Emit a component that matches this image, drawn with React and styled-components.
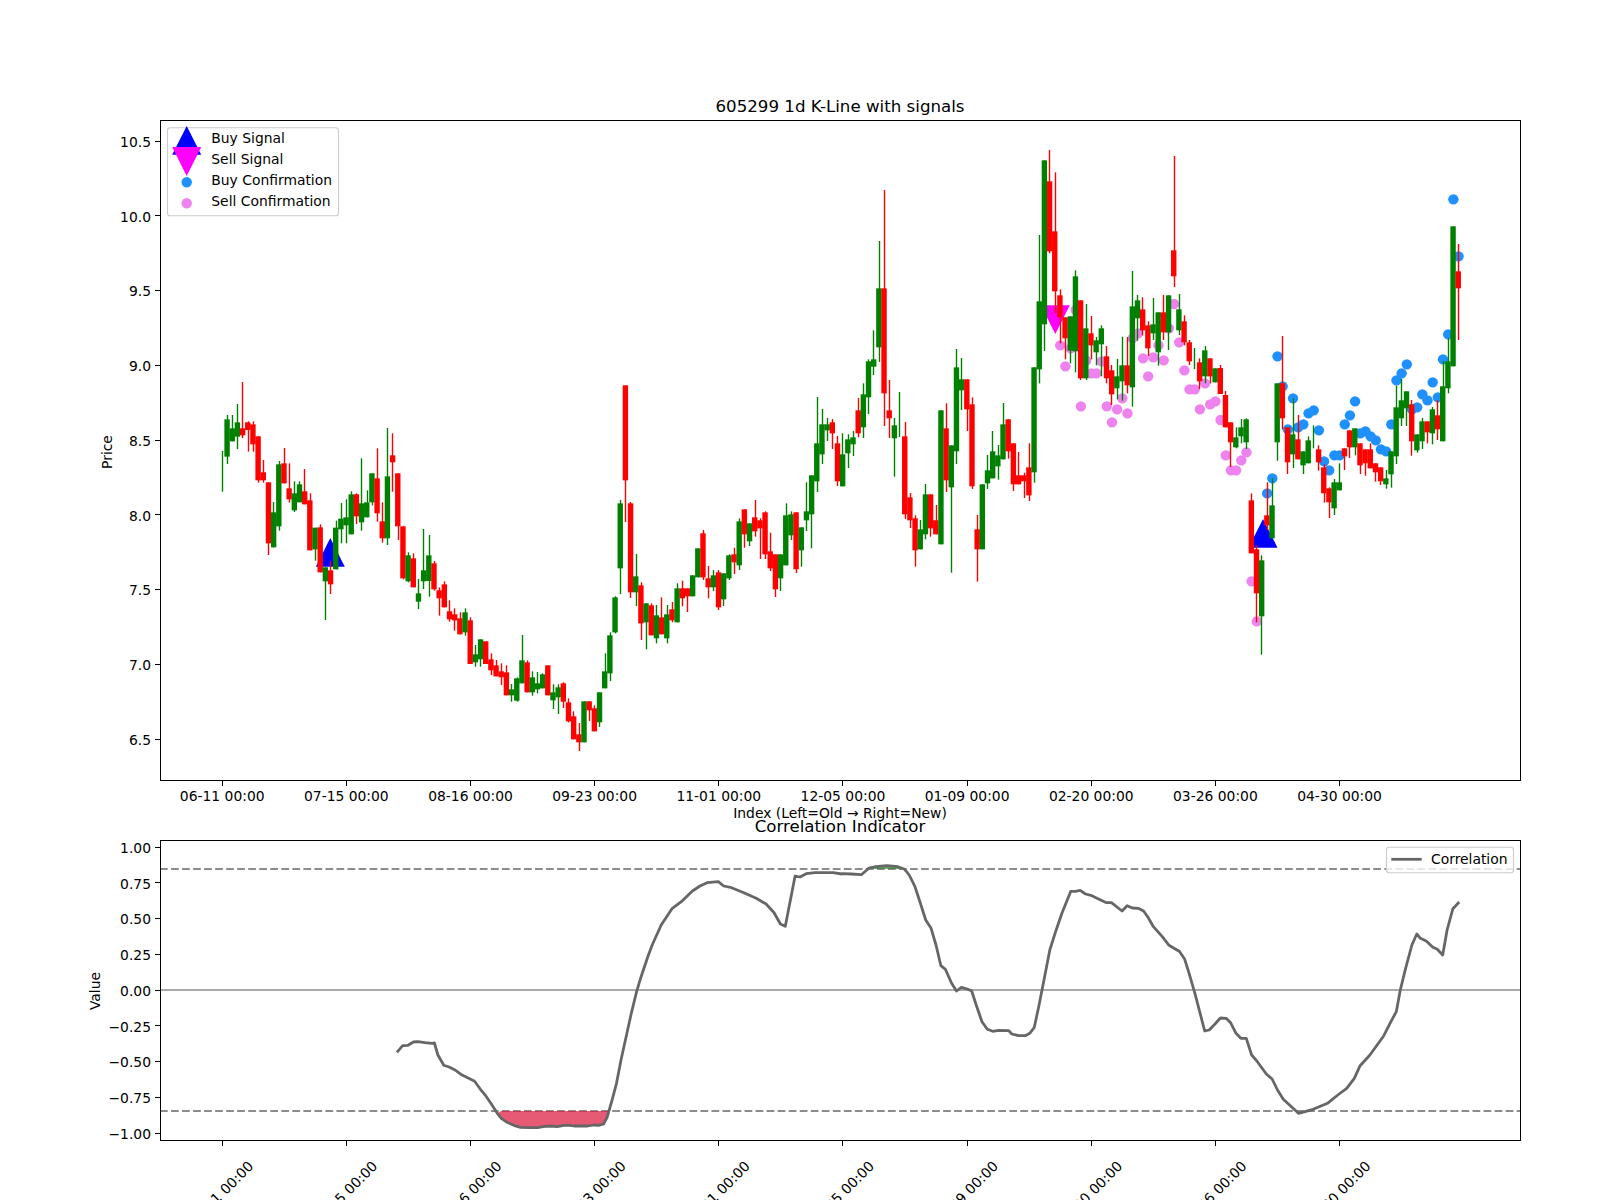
import React from "react";
import styled, { createGlobalStyle } from "styled-components";

const GlobalStyle = createGlobalStyle`
  html, body { margin: 0; padding: 0; background: #fff; }
  body { overflow: hidden; font-family: "DejaVu Sans", sans-serif; }
`;

const Figure = styled.div`
  width: 1600px;
  height: 1200px;
  display: flex;
  flex-direction: column;
  background: #fff;
`;
const Plot = styled.svg`
  display: block;
  flex: none;
  width: 1600px;
  height: ${(p) => p.$h}px;
  overflow: visible;
`;
const Frame = styled.rect`
  fill: none;
  stroke: #000;
  stroke-width: 1;
  shape-rendering: crispEdges;
`;
const Tick = styled.line`
  stroke: #000;
  stroke-width: 1;
  shape-rendering: crispEdges;
`;
const Label = styled.text`
  font-family: "DejaVu Sans", sans-serif;
  font-size: 13.89px;
  fill: #000;
  text-anchor: ${(p) => p.$anchor || "middle"};
`;
const Title = styled(Label)`
  font-size: 16.67px;
`;
const LegendBox = styled.rect`
  fill: #fff;
  fill-opacity: 0.8;
  stroke: #ccc;
  stroke-width: 1.1;
`;
const Wick = styled.rect`
  fill: ${(p) => p.$color};
`;
const Body = styled.rect`
  fill: ${(p) => p.$color};
`;
const Dot = styled.circle`
  fill: ${(p) => p.$color};
`;
const Marker = styled.polygon`
  fill: ${(p) => p.$color};
`;
const Level = styled.line`
  stroke: ${(p) => p.$color};
  stroke-width: 2.08;
  stroke-dasharray: ${(p) => (p.$dashed ? "7.7 3.33" : "none")};
`;
const Curve = styled.polyline`
  fill: none;
  stroke: #666;
  stroke-width: 2.78;
  stroke-linejoin: round;
`;
const ZoneFill = styled.polygon`
  fill: ${(p) => p.$color};
  fill-opacity: 0.7;
`;
const LegendLine = styled.line`
  stroke: #666;
  stroke-width: 2.78;
`;

const seg = (y0, rows) =>
  rows.map(([c, wt, bt, bb, wb]) => ({
    c,
    wt: y0 + wt / 3,
    bt: bt == null ? null : y0 + bt / 3,
    bb: bb == null ? null : y0 + bb / 3,
    wb: y0 + wb / 3,
  }));

const candles = [
  ...seg(380, [
    ["g",213,null,null,335],["g",105,118,230,252],["g",105,145,184,184],["g",72,127,170,207],["r",6,145,166,174],
    ["r",124,127,150,215],["r",124,133,193,215],["r",169,169,301,308],["r",240,277,301,308],["r",307,307,490,525],
    ["g",366,397,502,502],["g",243,253,439,452],["r",204,250,310,310],["r",250,325,358,368],["g",304,340,391,396],
    ["g",304,313,367,367],["r",267,334,373,373],["r",340,361,511,511],["g",443,443,508,542],["r",433,442,577,577],
    ["g",562,562,604,720],["r",544,571,613,642],["g",422,443,568,568],["g",369,416,448,490],["g",358,412,436,490],
    ["g",334,343,463,463],["r",340,343,409,432],["g",235,370,427,452],["g",331,367,412,412],["g",280,280,367,376],
    ["r",205,295,400,425],["r",367,424,475,488],["g",144,289,475,495],["r",160,226,247,335],["r",280,280,439,480],
    ["r",439,439,595,598],["g",517,526,604,607],["r",520,535,622,622],
  ]),
  ...seg(480, [
    ["g",297,340,365,387],["g",147,271,304,327],["g",165,226,303,350],["r",243,250,328,332],["r",322,331,355,407],
    ["r",304,313,382,382],["r",361,394,418,425],["r",385,403,421,452],["r",397,415,463,463],["g",385,397,457,467],
    ["r",412,421,552,552],["g",495,523,547,560],["g",478,478,538,560],["r",484,484,552,552],["r",520,538,571,585],
    ["r",540,556,589,589],["r",550,574,592,615],["r",556,577,646,646],["g",612,628,646,665],["g",592,595,662,665],
    ["g",465,541,610,610],["r",541,547,637,637],["g",574,592,637,647],["g",576,610,628,640],["g",580,583,625,625],
    ["r",556,556,646,646],["g",613,637,661,687],["g",613,622,652,702],["r",607,610,665,684],["r",655,667,724,727],
    ["r",694,709,778,778],["r",729,763,787,813],["g",664,664,787,787],["r",664,664,691,723],["r",676,685,754,754],
    ["g",637,637,727,741],["g",520,574,625,625],["g",457,466,580,603],["g",349,352,457,460],
  ]),
  ...seg(360, [
    ["g",420,430,625,702],["r",76,76,361,486],["r",426,430,697,714],["g",582,649,697,738],["r",667,676,790,840],
    ["g",730,730,787,868],["r",730,736,826,826],["g",735,766,835,850],["r",712,772,823,823],["g",735,763,835,850],
    ["r",726,748,781,787],["g",670,685,787,787],["r",662,685,715,739],["r",685,685,709,756],["g",646,646,709,709],
    ["g",565,565,652,652],["r",510,520,652,660],["r",618,655,682,715],["g",630,646,682,693],["r",630,637,742,750],
    ["g",640,640,718,738],["g",583,586,655,660],["r",563,583,607,642],["g",475,484,616,630],["r",448,448,523,563],
    ["g",490,490,544,558],["r",420,472,514,530],["r",475,481,505,597],["r",454,457,583,597],["r",518,574,625,633],
    ["r",583,583,688,711],["g",583,583,655,693],["g",430,466,616,616],["g",454,463,526,540],["r",457,457,628,639],
  ]),
  ...seg(170, [
    ["g",1072,1072,1141,1190],["g",937,1024,1051,1083],["g",916,916,1033,1135],["g",681,820,934,966],["g",717,763,853,882],
    ["g",744,763,781,813],["r",747,757,790,837],["r",798,820,934,948],["g",790,853,949,949],["g",793,808,850,894],
    ["g",783,802,823,858],["r",684,721,790,802],["g",640,673,772,804],["g",568,574,682,732],["g",481,568,590,615],
    ["g",213,355,532,576],["r",60,355,670,768],["r",630,721,745,804],["g",744,766,805,920],["g",666,null,null,801],
    ["r",756,799,1033,1047],["r",969,982,1051,1074],["r",1036,1045,1141,1190],["g",1050,1078,1138,1138],["g",942,973,1093,1108],
    ["r",973,973,1075,1100],["r",1005,1051,1093,1093],["g",721,721,1123,1123],["r",700,775,931,966],["g",826,826,952,1208],
    ["g",537,592,844,882],["g",564,628,661,720],["r",628,628,718,783],["r",682,703,949,957],["r",1035,1078,1138,1235],
    ["g",943,943,1138,1138],["g",855,901,940,957],["g",783,844,925,925],["g",825,856,889,929],["g",699,763,868,868],
    ["r",748,748,844,866],["r",820,820,943,963],["r",846,916,943,943],["r",908,916,934,984],["r",820,892,976,993],
    ["g",592,592,907,938],["g",195,394,598,640],
  ]),
  ...seg(130, [
    ["g",91,91,583,663],["r",60,154,364,370],["r",127,304,484,550],["r",478,496,562,640],["r",562,562,625,688],
    ["g",559,559,662,700],["g",421,439,664,727],["r",511,511,745,750],["g",522,595,745,750],["r",558,610,646,688],
    ["g",621,631,667,706],["g",586,595,643,739],["r",648,679,745,760],["r",705,721,793,825],["g",687,739,775,808],
    ["g",620,706,754,812],["r",621,706,766,790],["g",423,529,772,830],["g",495,511,565,632],["r",502,538,601,616],
    ["r",574,586,655,678],["g",504,583,610,630],["g",547,547,667,707],["r",495,547,607,630],["g",496,496,607,660],
    ["r",78,361,439,471],["g",492,538,601,615],["r",556,574,637,646],["r",630,637,694,705],["g",654,null,null,717],
    ["r",685,697,754,777],["g",648,661,739,760],["r",685,685,739,760],["g",715,715,757,757],
  ]),
  ...seg(330, [
    ["r",105,114,192,192],["r",183,195,292,292],["r",277,277,337,411],["g",292,322,352,355],["g",267,292,319,340],
    ["g",265,268,337,357],["r",490,511,670,670],["r",646,658,790,877],["g",676,691,859,974],["r",457,556,586,600],
    ["g",445,526,625,625],["g",160,160,337,392],["r",18,160,265,298],["r",292,292,397,432],["g",205,313,373,414],
    ["r",255,328,388,388],["g",364,364,406,432],["g",319,331,400,400],["g",286,null,null,355],
  ]),
  ...seg(180, [
    ["r",796,808,847,872],["r",853,862,940,968],["r",922,925,967,1014],["g",897,907,985,1005],["g",850,907,931,931],
    ["r",805,805,829,870],["r",751,751,802,834],["g",745,745,802,826],["r",790,790,856,882],["r",808,808,850,887],
    ["r",790,808,865,865],["r",850,850,877,905],["r",862,862,904,915],["g",870,895,913,926],["g",814,814,883,923],
    ["g",617,682,829,852],["g",596,661,715,738],["g",634,634,685,738],["r",660,673,784,827],["g",763,763,811,818],
    ["g",714,724,784,807],["r",724,724,757,790],["g",681,688,760,793],["r",660,706,748,780],["g",543,619,784,784],
    ["g",475,544,625,640],["g",139,139,559,559],["r",192,274,325,480],
  ]),
];

const barX = (i) => 222.2 + 5.173 * i;
const COLORS = { r: "#ff0000", g: "#008000" };

const sellDotsY = [
  ...[646,709,655,540,829,692,730,730,694,829,877,838,805,850,625,610,685,739,682,646,691,595,522,637,721,778,778,838,760,823,814].map((p) => 130 + p / 3),
  ...[270,376,421,421,391,367,754,874].map((p) => 330 + p / 3),
];
const buyDots = [
  [202, 330 + 490 / 3], [203, 330 + 445 / 3],
  [204, 330 + 79 / 3], [205, 330 + 169 / 3], [206, 330 + 298 / 3], [207, 330 + 205 / 3], [208, 330 + 292 / 3],
  [209, 330 + 283 / 3], [210, 330 + 250 / 3], [211, 330 + 241 / 3],
  ...[751,844,871,826,826,733,706,664,760,754,769,781,808,814,733,601,580,553,688,682,643,661,607,652,538,463,58,229].map((p, k) => [212 + k, 180 + p / 3]),
];

const yUpper = (v) => 141 + (10.5 - v) * 149.5;
const yLower = (v) => 990 - v * 143;
const tickIdx = [0, 24, 48, 72, 96, 120, 144, 168, 192, 216];
const dateLabels = ["06-11 00:00", "07-15 00:00", "08-16 00:00", "09-23 00:00", "11-01 00:00", "12-05 00:00", "01-09 00:00", "02-20 00:00", "03-26 00:00", "04-30 00:00"];
const upperTicks = [10.5, 10, 9.5, 9, 8.5, 8, 7.5, 7, 6.5];
const lowerTicks = [1, 0.75, 0.5, 0.25, 0, -0.25, -0.5, -0.75, -1];
const fmtLower = (v) => (v < 0 ? "\u2212" : "") + Math.abs(v).toFixed(2);

const curveA = [[553,877],[566,857],[578,856],[590,846],[600,845],[616,848],[632,850],[637,849],[645,885],[658,916],[670,921],[682,929],[700,946],[714,955],[727,964],[740,988],[752,1007],[765,1033],[778,1060],[787,1075],[800,1087],[815,1096],[830,1102],[850,1103],[868,1103],[885,1099],[900,1098],[912,1100],[927,1096],[940,1096],[950,1098],[980,1098],[995,1095],[1005,1096],[1016,1092],[1024,1072],[1035,1020],[1045,970],[1055,900],[1065,840],[1078,760],[1090,695],[1100,650],[1115,590],[1125,555],[1145,495],[1170,445],[1190,425],[1215,393],[1232,378],[1248,368],[1273,365],[1285,378],[1300,382],[1330,398],[1358,415],[1380,432],[1398,458],[1412,492],[1423,499],[1445,348],[1456,351],[1470,341],[1490,338],[1530,338],[1550,342]]
  .map(([x, y]) => [150 + x / 2.24, 760 + y / 3]);
const curveB = [[5,341],[25,342],[48,344],[65,324],[80,320],[105,317],[130,320],[145,328],[155,345],[168,380],[180,430],[192,480],[204,505],[215,555],[226,617],[236,628],[250,670],[261,693],[272,682],[285,687],[295,693],[305,735],[318,785],[330,808],[342,814],[355,811],[378,812],[385,822],[400,827],[415,827],[425,820],[435,803],[445,740],[457,660],[470,570],[483,515],[497,460],[517,394],[527,394],[538,391],[550,402],[562,406],[578,416],[597,428],[608,428],[632,453],[643,437],[655,444],[668,445],[680,453],[690,472],[702,500],[722,530],[737,556],[750,566],[760,574],[772,597],[782,640],[795,700],[817,813],[827,810],[840,792],[852,774],[865,775],[875,788],[887,820],[898,835],[910,835],[922,885],[935,905],[955,942],[968,957],[980,990],[993,1018],[1027,1060],[1060,1048],[1092,1030],[1115,1005],[1135,985],[1152,955],[1165,917],[1187,885],[1203,855],[1218,827],[1232,790],[1246,755],[1255,690],[1267,625],[1281,555],[1292,522],[1300,535],[1313,543],[1328,562],[1338,568],[1350,585],[1360,510],[1373,446],[1387,426]]
  .map(([x, y]) => [840 + x / 2.24, 760 + y / 3]);
const pts = (list) => list.map(([x, y]) => `${x.toFixed(1)},${y.toFixed(1)}`).join(" ");

const lowBand = [[150 + 787 / 2.24, 1111], ...curveA.filter(([, y]) => y > 1111.5), [150 + 1028 / 2.24, 1111]];
const highBand = [[840 + 65 / 2.24, 869], ...curveB.filter(([x, y]) => y < 869 && x < 920), [840 + 148 / 2.24, 869]];

const tri = (cx, apex, base, half) => `${cx},${apex} ${cx - half},${base} ${cx + half},${base}`;

const legendRows = [
  { text: "Buy Signal", y: 143.3 },
  { text: "Sell Signal", y: 164.3 },
  { text: "Buy Confirmation", y: 185.3 },
  { text: "Sell Confirmation", y: 206.3 },
];

const snap = (v) => Math.floor(v) + 0.5;

function XTicks({ y }) {
  return tickIdx.map((i) => <Tick key={i} x1={snap(barX(i))} x2={snap(barX(i))} y1={y} y2={y + 5} />);
}

function PricePanel() {
  return (
    <Plot $h={820} viewBox="0 0 1600 820">
      <Title x={840} y={111.7}>605299 1d K-Line with signals</Title>
      <Marker $color="#0000ff" points={tri(330.3, 538, 566.7, 14.5)} />
      <Marker $color="#0000ff" points={tri(1263, 519, 547.7, 14.5)} />
      <Marker $color="#ff00ff" points="1040.8,305.3 1069.8,305.3 1055.3,334" />
      {sellDotsY.map((y, k) => <Dot key={k} $color="#ee82ee" cx={barX(162 + k)} cy={y} r={5.2} />)}
      {buyDots.map(([i, y]) => <Dot key={i} $color="#1e90ff" cx={barX(i)} cy={y} r={5.2} />)}
      {candles.map((b, i) =>
        b.bt == null ? null : (
          <Body key={i} $color={COLORS[b.c]} x={barX(i) - 3} y={b.bt} width={5.4} height={Math.max(b.bb - b.bt, 1)} />
        )
      )}
      {candles.map((b, i) => (
        <Wick key={i} $color={COLORS[b.c]} x={snap(barX(i)) - 0.7} y={b.wt} width={1.39} height={b.wb - b.wt} />
      ))}
      <Frame x={160.5} y={120.5} width={1360} height={660} />
      {upperTicks.map((v) => (
        <g key={v}>
          <Tick x1={155} x2={160} y1={snap(yUpper(v))} y2={snap(yUpper(v))} />
          <Label $anchor="end" x={151} y={yUpper(v) + 5.8}>{v.toFixed(1)}</Label>
        </g>
      ))}
      <XTicks y={781} />
      {dateLabels.map((d, k) => <Label key={d} x={barX(tickIdx[k])} y={800.7}>{d}</Label>)}
      <Label x={840} y={817.5}>Index (Left=Old → Right=New)</Label>
      <Label x={112} y={452} transform="rotate(-90 112 452)">Price</Label>

      <LegendBox x={167.5} y={127.7} width={171} height={88} rx={2.8} />
      <Marker $color="#0000ff" points={tri(186.7, 126, 154.7, 14.5)} />
      <Marker $color="#ff00ff" points="172.2,147 201.2,147 186.7,176" />
      <Dot $color="#1e90ff" cx={186.7} cy={182.3} r={5.2} />
      <Dot $color="#ee82ee" cx={186.7} cy={203.3} r={5.2} />
      {legendRows.map((r) => <Label key={r.text} $anchor="start" x={211.3} y={r.y}>{r.text}</Label>)}
    </Plot>
  );
}

function CorrelationPanel() {
  return (
    <Plot $h={380} viewBox="0 820 1600 380">
      <Title x={840} y={831.7}>Correlation Indicator</Title>
      <Level $color="#8c8c8c" $dashed x1={160} x2={1520} y1={869} y2={869} />
      <Level $color="#8c8c8c" $dashed x1={160} x2={1520} y1={1111} y2={1111} />
      <Level $color="#aaa" x1={160} x2={1520} y1={990} y2={990} />
      <ZoneFill $color="#dc143c" points={pts(lowBand)} />
      <ZoneFill $color="#228b22" points={pts(highBand)} />
      <Curve points={pts([...curveA, ...curveB])} />
      <Frame x={160.5} y={840.5} width={1360} height={300} />
      {lowerTicks.map((v) => (
        <g key={v}>
          <Tick x1={155} x2={160} y1={snap(yLower(v))} y2={snap(yLower(v))} />
          <Label $anchor="end" x={151} y={yLower(v) + 5.8}>{fmtLower(v)}</Label>
        </g>
      ))}
      <XTicks y={1141} />
      {dateLabels.map((d, k) => {
        const x = barX(tickIdx[k]) - 1.5;
        return <Label key={d} x={x} y={1198.5} transform={`rotate(-45 ${x} 1193.5)`}>{d}</Label>;
      })}
      <Label x={99.5} y={991} transform="rotate(-90 99.5 991)">Value</Label>

      <LegendBox x={1386.5} y={847.3} width={127} height={25.4} rx={2.8} />
      <LegendLine x1={1391.3} x2={1421.7} y1={859.3} y2={859.3} />
      <Label $anchor="start" x={1431} y={863.7}>Correlation</Label>
    </Plot>
  );
}

export default function App() {
  return (
    <Figure>
      <GlobalStyle />
      <PricePanel />
      <CorrelationPanel />
    </Figure>
  );
}
